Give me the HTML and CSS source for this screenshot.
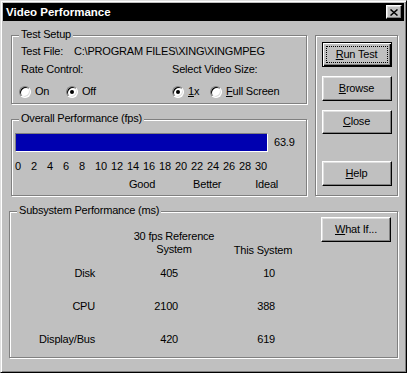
FILE: index.html
```html
<!DOCTYPE html>
<html lang="en">
<head>
  <meta charset="UTF-8">
  <title>Video Performance</title>
  <link rel="stylesheet" href="styles.css">
</head>
<body>
  <div class="window">
    <div class="titlebar">
      <span class="title">Video Performance</span>
      <button class="caption-btn" aria-label="Close">
        <svg width="8" height="7" viewBox="0 0 8 7"><path d="M0.5 0.5 L7.5 6.5 M7.5 0.5 L0.5 6.5" stroke="#000" stroke-width="1.5" fill="none"/></svg>
      </button>
    </div>

    <div class="dialog">
      <div class="left">
        <!-- Test setup -->
        <div class="group setup">
          <div class="group-title">Test Setup</div>
          <div class="file-row">
            <span class="file-label">Test File:</span>
            <span>C:\PROGRAM FILES\XING\XINGMPEG</span>
          </div>
          <div class="options">
            <div>Rate Control:</div>
            <div>Select Video Size:</div>
            <div class="radios">
              <div class="radio on"><span class="mark"></span><span>On</span></div>
              <div class="radio"><span class="mark checked"></span><span>Off</span></div>
            </div>
            <div class="radios">
              <div class="radio onex"><span class="mark checked"></span><span><u>1</u>x</span></div>
              <div class="radio"><span class="mark"></span><span><u>F</u>ull Screen</span></div>
            </div>
          </div>
        </div>

        <!-- Overall performance -->
        <div class="group overall">
          <div class="group-title">Overall Performance (fps)</div>
          <div class="bar-row">
            <div class="bar"></div>
            <span class="fps">63.9</span>
          </div>
          <div class="scale">
            <span>0</span><span>2</span><span>4</span><span>6</span>
            <span>8</span><span>10</span><span>12</span><span>14</span>
            <span>16</span><span>18</span><span>20</span><span>22</span>
            <span>24</span><span>26</span><span>28</span><span>30</span>
          </div>
          <div class="ratings">
            <span class="good">Good</span>
            <span class="better">Better</span>
            <span class="ideal">Ideal</span>
          </div>
        </div>
      </div>

      <!-- Buttons -->
      <div class="group buttons">
        <button class="btn default"><span class="focus"><u>R</u>un Test</span></button>
        <button class="btn"><u>B</u>rowse</button>
        <button class="btn"><u>C</u>lose</button>
        <button class="btn help"><u>H</u>elp</button>
      </div>

      <!-- Subsystem performance -->
      <div class="group subsystem">
        <div class="group-title">Subsystem Performance (ms)</div>
        <div class="table">
          <div class="head"></div>
          <div class="head ref">30 fps Reference<br>System</div>
          <div class="head this">This System</div>

          <div class="name">Disk</div>
          <div class="num ref">405</div>
          <div class="num this">10</div>

          <div class="name">CPU</div>
          <div class="num ref">2100</div>
          <div class="num this">388</div>

          <div class="name">Display/Bus</div>
          <div class="num ref">420</div>
          <div class="num this">619</div>
        </div>
        <button class="btn whatif"><u>W</u>hat If...</button>
      </div>
    </div>
  </div>
</body>
</html>
```

FILE: styles.css
```css
body {
  margin: 0;
  font-family: "Liberation Sans", Arial, sans-serif;
  font-size: 11px;
  line-height: 13px;
  letter-spacing: -0.2px;
  color: #000;
}
.window {
  width: 407px;
  height: 373px;
  box-sizing: border-box;
  background: #c0c0c0;
  border: 1px solid;
  border-color: #dfdfdf #000 #000 #dfdfdf;
  box-shadow: inset 1px 1px #fff, inset -1px -1px #808080;
  padding: 2px;
}
.titlebar {
  height: 18px;
  background: #000;
  color: #fff;
  display: flex;
  align-items: center;
  padding: 0 2px 0 3px;
}
.title {
  font-weight: bold;
  font-size: 11.5px;
  letter-spacing: 0;
}
.caption-btn {
  margin-left: auto;
  width: 16px;
  height: 14px;
  box-sizing: border-box;
  padding: 0;
  background: #c0c0c0;
  border: 1px solid;
  border-color: #fff #000 #000 #fff;
  box-shadow: inset -1px -1px #808080, inset 1px 1px #dfdfdf;
  display: flex;
  align-items: center;
  justify-content: center;
}
.dialog {
  display: grid;
  grid-template-columns: 296px 83px;
  column-gap: 8px;
  row-gap: 15px;
  padding: 14px 0 0 8px;
}
.left {
  display: flex;
  flex-direction: column;
  gap: 15px;
}
.group {
  position: relative;
  box-sizing: border-box;
  border: 1px solid #808080;
  box-shadow: inset 1px 1px #fff, 1px 1px #fff;
}
.group-title {
  position: absolute;
  top: -8px;
  left: 7px;
  padding: 0 2px;
  background: #c0c0c0;
}
.setup {
  height: 69px;
  padding: 9px 0 0 9px;
}
.file-row {
  display: flex;
}
.file-label {
  width: 53px;
}
.options {
  display: grid;
  grid-template-columns: 151px auto;
  row-gap: 9px;
  margin-top: 5px;
}
.radios {
  display: flex;
}
.radio {
  display: flex;
  align-items: center;
  gap: 4px;
}
.radio.on {
  width: 47px;
  margin-left: -2px;
}
.radio.onex {
  width: 38px;
}
.mark {
  position: relative;
  width: 12px;
  height: 12px;
  box-sizing: border-box;
  border-radius: 50%;
  background: #fff;
  border: 1px solid;
  border-color: #808080 #fff #fff #808080;
  box-shadow: inset 1px 1px #000, inset -1px -1px #dfdfdf;
}
.mark.checked::after {
  content: "";
  position: absolute;
  left: 3px;
  top: 3px;
  width: 4px;
  height: 4px;
  border-radius: 50%;
  background: #000;
}
.overall {
  height: 77px;
  padding: 13px 0 0 3px;
}
.bar-row {
  display: flex;
  align-items: center;
  gap: 6px;
}
.bar {
  width: 253px;
  height: 19px;
  box-sizing: border-box;
  background: #0000b0;
  border: 1px solid;
  border-color: #808080 #fff #fff #808080;
}
.scale {
  display: grid;
  grid-template-columns: repeat(16, 16px);
  margin-top: 8px;
}
.ratings {
  display: flex;
  margin-top: 5px;
}
.good {
  margin-left: 114px;
}
.better {
  margin-left: 38px;
}
.ideal {
  margin-left: 34px;
}
.buttons {
  grid-row: 1;
  grid-column: 2;
  height: 161px;
  display: flex;
  flex-direction: column;
  align-items: center;
  padding-top: 6px;
}
.btn {
  width: 70px;
  height: 25px;
  box-sizing: border-box;
  padding: 0;
  font: inherit;
  letter-spacing: inherit;
  color: #000;
  background: #c0c0c0;
  border: 1px solid;
  border-color: #fff #000 #000 #fff;
  box-shadow: inset -1px -1px #808080, inset 1px 1px #dfdfdf;
  margin-bottom: 9px;
}
.btn.default {
  border-color: #000;
  box-shadow: inset 1px 1px #fff, inset -1px -1px #000, inset -2px -2px #808080;
  display: flex;
  align-items: center;
  justify-content: center;
}
.focus {
  display: block;
  width: 60px;
  line-height: 15px;
  outline: 1px dotted #000;
}
.btn.help {
  margin-top: 18px;
}
.subsystem {
  grid-column: 1 / -1;
  margin-left: -2px;
  height: 147px;
  display: flex;
  align-items: flex-start;
  padding-top: 5px;
}
.table {
  display: grid;
  grid-template-columns: 120px 88px 90px;
  grid-template-rows: 27px 33px 33px 33px;
  align-items: center;
  margin-top: 13px;
}
.head {
  align-self: start;
  text-align: center;
}
.head.this {
  align-self: end;
}
.name {
  text-align: right;
  padding-right: 35px;
}
.num.ref {
  text-align: right;
  padding-right: 40px;
}
.num.this {
  text-align: right;
  padding-right: 33px;
}
.whatif {
  margin-left: auto;
  margin-right: 6px;
}
```
